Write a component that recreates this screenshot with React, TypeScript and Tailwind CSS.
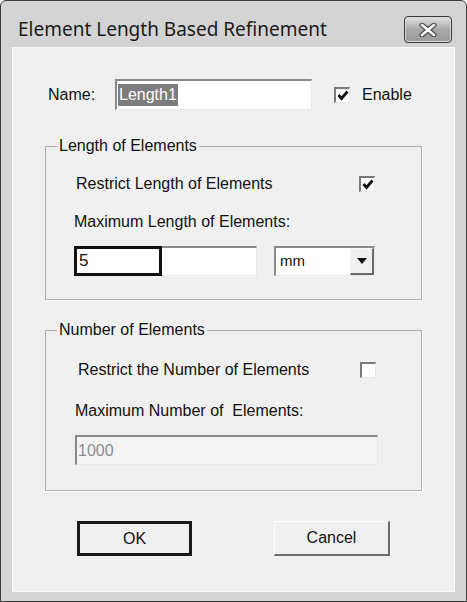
import React from "react";

function CheckBox({ checked }: { checked?: boolean }) {
  return (
    <div className="flex h-[16px] w-[16px] items-center justify-center border-t-2 border-l-2 border-t-[#7a7a7a] border-l-[#7a7a7a] border-r border-b border-r-[#e6e6e6] border-b-[#e6e6e6] bg-white">
      {checked && (
        <svg width="12" height="11" viewBox="0 0 12 11">
          <path d="M1.5 5 L4.5 8.5 L10.5 1.5" fill="none" stroke="#111" strokeWidth="2.8" />
        </svg>
      )}
    </div>
  );
}

function CloseButton() {
  return (
    <div className="flex h-[27px] w-[48px] items-center justify-center rounded-[4px] border border-[#3c3c3c] bg-gradient-to-b from-[#e4e4e4] via-[#a9a9a9] to-[#9a9a9a] shadow-[inset_0_0_0_1px_#d8d8d8]">
      <svg width="18" height="14" viewBox="0 0 18 14">
        <path d="M3 2 L15 12 M15 2 L3 12" stroke="#4a4a4a" strokeWidth="5" strokeLinecap="round" />
        <path d="M3 2 L15 12 M15 2 L3 12" stroke="#ffffff" strokeWidth="2.6" strokeLinecap="round" />
      </svg>
    </div>
  );
}

export default function App() {
  return (
    <div className="flex h-[602px] w-[467px] flex-col overflow-hidden rounded-t-[6px] border border-[#3a3a3a] bg-[#d4d4d4] font-['Liberation_Sans',Arial,sans-serif] text-[16px] text-[#111]">
      {/* title bar */}
      <div className="flex h-[46px] shrink-0 items-end justify-between pb-[4px] pl-[17px] pr-[14px]">
        <span className="mb-[1px] font-['Noto_Sans',sans-serif] text-[19px] leading-[26px] text-[#1a1a1a]">
          Element Length Based Refinement
        </span>
        <CloseButton />
      </div>

      {/* client area */}
      <div className="mx-[11px] mb-[9px] flex flex-1 flex-col border border-[#fafafa] bg-[#f0f0f0]">
        {/* name row */}
        <div className="mt-[31px] flex h-[31px] items-center">
          <span className="ml-[35px] w-[67px]">Name:</span>
          <div className="flex h-[31px] w-[197px] items-center border-t-2 border-l-2 border-t-[#8a8a8a] border-l-[#8a8a8a] border-r border-b border-r-[#e8e8e8] border-b-[#e8e8e8] bg-white pl-[1px]">
            <span className="bg-[#7c7c7c] px-[1px] leading-[22px] text-white">Length1</span>
          </div>
          <div className="ml-[22px]">
            <CheckBox checked />
          </div>
          <span className="ml-[12px]">Enable</span>
        </div>

        {/* group 1 */}
        <fieldset className="mt-[27px] ml-[32px] w-[377px] border border-[#b0b0b0] px-0 pb-[23px] shadow-[1px_1px_0_#ffffff]">
          <legend className="ml-[11px] px-[2px] leading-[18px]">Length of Elements</legend>
          <div className="mt-[20px] flex h-[17px] items-center">
            <span className="ml-[30px] w-[283px]">Restrict Length of Elements</span>
            <CheckBox checked />
          </div>
          <div className="mt-[21px] ml-[28px] leading-[18px]">Maximum Length of Elements:</div>
          <div className="mt-[15px] ml-[28px] flex h-[30px]">
            <div className="flex w-[183px] bg-white">
              <div className="flex w-[88px] items-center border-[3px] border-[#111] pl-[2px] text-[17px]">5</div>
              <div className="flex-1 border-t-2 border-r border-b border-t-[#8a8a8a] border-r-[#e8e8e8] border-b-[#e8e8e8]" />
            </div>
            <div className="ml-[17px] flex w-[101px] border-t-2 border-l-2 border-t-[#8a8a8a] border-l-[#8a8a8a] border-r border-b border-r-[#e8e8e8] border-b-[#e8e8e8] bg-white">
              <span className="flex flex-1 items-center pl-[4px] text-[15px]">mm</span>
              <div className="flex w-[24px] items-center justify-center border-t border-l border-t-[#f8f8f8] border-l-[#f8f8f8] border-r-2 border-b-2 border-r-[#6a6a6a] border-b-[#6a6a6a] bg-[#f0f0f0]">
                <svg width="10" height="6" viewBox="0 0 10 6">
                  <path d="M0 0 H10 L5 6 Z" fill="#111" />
                </svg>
              </div>
            </div>
          </div>
        </fieldset>

        {/* group 2 */}
        <fieldset className="mt-[21px] ml-[32px] w-[377px] border border-[#b0b0b0] px-0 pb-[25px] shadow-[1px_1px_0_#ffffff]">
          <legend className="ml-[11px] px-[2px] leading-[18px]">Number of Elements</legend>
          <div className="mt-[22px] flex h-[17px] items-center">
            <span className="ml-[32px] w-[282px]">Restrict the Number of Elements</span>
            <CheckBox />
          </div>
          <div className="mt-[24px] ml-[29px] leading-[18px]">Maximum Number of&nbsp; Elements:</div>
          <div className="mt-[15px] ml-[29px] flex h-[30px] w-[303px] items-center border-t-2 border-l-2 border-t-[#8a8a8a] border-l-[#8a8a8a] border-r border-b border-r-[#e8e8e8] border-b-[#e8e8e8] bg-[#f4f4f4] pl-[1px] text-[#8c8c8c]">
            1000
          </div>
        </fieldset>

        {/* buttons */}
        <div className="mt-[30px] flex">
          <button className="ml-[64px] flex h-[35px] w-[115px] items-center justify-center border-[3px] border-[#1a1a1a] bg-[#f0f0f0] text-[16px]">
            OK
          </button>
          <button className="ml-[82px] flex h-[35px] w-[116px] items-center justify-center border-t border-l border-t-[#fcfcfc] border-l-[#fcfcfc] border-r-2 border-b-2 border-r-[#6a6a6a] border-b-[#6a6a6a] bg-[#f0f0f0] text-[16px]">
            Cancel
          </button>
        </div>
      </div>
    </div>
  );
}
